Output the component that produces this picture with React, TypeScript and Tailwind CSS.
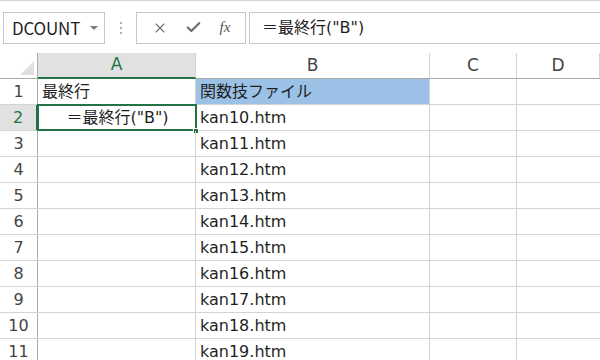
import { X, Check } from "lucide-react";

const font = "font-['Meiryo_UI','DejaVu_Sans','Noto_Sans_CJK_JP',sans-serif]";

const cols = [
  { key: "A", w: "w-[158px]" },
  { key: "B", w: "w-[234px]" },
  { key: "C", w: "w-[87px]" },
  { key: "D", w: "flex-1" },
];

const rows = Array.from({ length: 11 }, (_, i) => i + 1);

function cellB(r: number) {
  if (r === 1) return "関数技ファイル";
  if (r >= 2 && r <= 11) return `kan${r + 8}.htm`;
  return "";
}

export default function App() {
  return (
    <div className={`w-[600px] h-[360px] overflow-hidden bg-white border-t border-[#d4d4d4] ${font} text-[#1f1f1f]`}>
      {/* formula bar */}
      <div className="flex items-center h-[52px] pt-[1px]">
        <div className="ml-[3px] w-[102px] h-[32px] border border-[#c6c6c6] flex items-center pl-[8px] pr-[6px]">
          <span className="text-[17px] flex-1 font-['Noto_Sans_CJK_JP',sans-serif] tracking-[-0.2px]">DCOUNT</span>
          <span className="w-0 h-0 border-l-[4px] border-r-[4px] border-t-[4px] border-l-transparent border-r-transparent border-t-[#7a7a7a]" />
        </div>
        <div className="w-[31px] flex flex-col items-center gap-[3px]">
          <span className="w-[2px] h-[2px] bg-[#b0b0b0]" />
          <span className="w-[2px] h-[2px] bg-[#b0b0b0]" />
          <span className="w-[2px] h-[2px] bg-[#b0b0b0]" />
        </div>
        <div className="w-[110px] h-[32px] border border-[#c6c6c6] flex items-center justify-around px-[6px]">
          <X size={16} strokeWidth={1.6} className="text-[#6e6e6e]" />
          <Check size={17} strokeWidth={3.2} className="text-[#6e6e6e]" />
          <span className="text-[15px] italic text-[#555] font-['Liberation_Serif',serif]">fx</span>
        </div>
        <div className="ml-[3px] flex-1 h-[32px] border border-[#c6c6c6] border-r-0 flex items-center pl-[12px] text-[16px]">
          ＝最終行("B")
        </div>
      </div>

      {/* column headers */}
      <div className="flex h-[26px] border-b border-[#ababab]">
        <div className="w-[38px] border-r border-[#ababab] relative bg-white">
          <span
            className="absolute right-[3px] bottom-[3px] w-0 h-0"
            style={{ borderBottom: "14px solid #dfdfdf", borderLeft: "14px solid transparent" }}
          />
        </div>
        {cols.map((c) =>
          c.key === "A" ? (
            <div key={c.key} className={`${c.w} bg-[#e1e1e1] border-b-[2px] border-[#217346] -mb-[1px] flex items-center justify-center text-[17px] text-[#217346] border-r border-r-[#d4d4d4]`}>
              A
            </div>
          ) : (
            <div key={c.key} className={`${c.w} border-r border-[#d4d4d4] flex items-center justify-center text-[17px] text-[#444]`}>
              {c.key}
            </div>
          )
        )}
      </div>

      {/* rows */}
      {rows.map((r) => (
        <div key={r} className="flex h-[26px] border-b border-[#d4d4d4]">
          <div
            className={`w-[38px] border-r flex items-center justify-center text-[16px] ${
              r === 2 ? "bg-[#e1e1e1] text-[#217346] border-r-[2px] border-r-[#217346]" : "text-[#444] border-[#ababab]"
            }`}
          >
            {r}
          </div>
          <div className="w-[158px] border-r border-[#d4d4d4] flex items-center text-[16px] relative">
            {r === 1 && <span className="pl-[4px]">最終行</span>}
            {r === 2 && (
              <>
                <span className="w-full text-center pl-[2px]">＝最終行("B")</span>
                <span className="absolute -left-[1px] -top-[1px] -right-[2px] -bottom-[1px] border-[2px] border-[#217346]" />
                <span className="absolute -right-[4px] -bottom-[4px] w-[6px] h-[6px] bg-[#217346] border border-white" />
              </>
            )}
          </div>
          <div className={`w-[234px] border-r border-[#d4d4d4] flex items-center pl-[4px] text-[16px] ${r === 1 ? "bg-[#9bc2e6]" : ""}`}>
            {cellB(r)}
          </div>
          <div className="w-[87px] border-r border-[#d4d4d4]" />
          <div className="flex-1" />
        </div>
      ))}
    </div>
  );
}
